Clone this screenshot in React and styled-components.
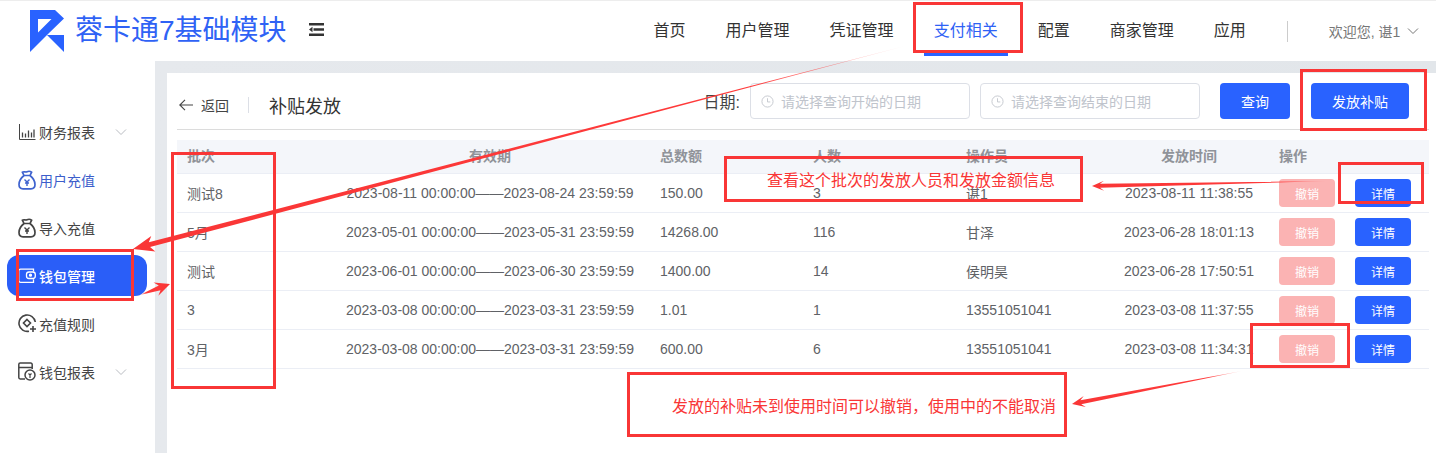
import styled, { createGlobalStyle } from "styled-components"

const GlobalStyle = createGlobalStyle`
    html, body {
        margin: 0;
        height: 100%;
        overflow: hidden;
        background: #fff;
    }
    body, button, input {
        font-family: "Liberation Sans", "Noto Sans CJK SC", sans-serif;
    }
`

const navItems = ["首页", "用户管理", "凭证管理", "支付相关", "配置", "商家管理", "应用"]

const rows = [
    ["测试8", "2023-08-11 00:00:00——2023-08-24 23:59:59", "150.00", "3", "谌1", "2023-08-11 11:38:55"],
    ["5月", "2023-05-01 00:00:00——2023-05-31 23:59:59", "14268.00", "116", "甘泽", "2023-06-28 18:01:13"],
    ["测试", "2023-06-01 00:00:00——2023-06-30 23:59:59", "1400.00", "14", "侯明昊", "2023-06-28 17:50:51"],
    ["3", "2023-03-08 00:00:00——2023-03-31 23:59:59", "1.01", "1", "13551051041", "2023-03-08 11:37:55"],
    ["3月", "2023-03-08 00:00:00——2023-03-31 23:59:59", "600.00", "6", "13551051041", "2023-03-08 11:34:31"],
]

const Chevron = ({ size = 12, color = "#b9bcc2" }) => (
    <svg width={size} height={size} viewBox="0 0 12 12" fill="none" stroke={color} strokeWidth="1">
        <path d="M1 3.5 6 8.5 11 3.5" />
    </svg>
)

const BagIcon = ({ color }) => (
    <svg width="18" height="20" viewBox="0 0 18 20" fill="none" stroke={color} strokeWidth="1.7">
        <path d="M6 5.5 4.4 2.2C6 1 7.5 2.6 9 1.8c1.500-.8 3-.8 4.600.4L12 5.500z" />
        <path d="M6 5.500C3.500 7.500 1 11 1 14.500 1 17.500 3 18.800 5 18.800h8c2 0 4-1.300 4-4.300 0-3.500-2.500-7-5-9" />
        <path d="M6.500 9.500 9 12l2.500-2.500M9 12v4M7 13h4" strokeWidth="1.400" />
    </svg>
)

const icons = {
    chart: (
        <svg width="17" height="16" viewBox="0 0 17 16" fill="none" stroke="#444" strokeWidth="1">
            <path d="M.5 0v15.500h16" />
            <path d="M3.500 13.500v-5M6.500 13.500v-4M9.500 13.500v-7M12.500 13.500v-5M15 13.500v-8" strokeWidth="1.300" />
        </svg>
    ),
    bagBlue: <BagIcon color="#3f63cf" />,
    bagDark: <BagIcon color="#444" />,
    wallet: (
        <svg width="18" height="15" viewBox="0 0 18 15" fill="none" stroke="#fff" strokeWidth="1.300">
            <path d="M15.500 3.500V1.200H2.500A1.800 1.800 0 0 0 .7 3v9.500a1.800 1.800 0 0 0 1.800 1.800h13v-3" />
            <rect x="8.500" y="4" width="8.800" height="6.500" rx="2.500" />
            <circle cx="12.500" cy="7.200" r="1" fill="#fff" />
        </svg>
    ),
    rule: (
        <svg width="19" height="19" viewBox="0 0 19 19" fill="none" stroke="#444" strokeWidth="1.600">
            <path d="M11 17.200A8.200 8.200 0 1 1 17.300 8" />
            <path d="M9 5.500 12.500 9 9 12.500 5.500 9z" />
            <path d="M15 12v6M12 15h6" />
        </svg>
    ),
    report: (
        <svg width="18" height="19" viewBox="0 0 18 19" fill="none" stroke="#444" strokeWidth="1.500">
            <path d="M7 17H2.200A1.400 1.400 0 0 1 .8 15.600V2.400A1.400 1.400 0 0 1 2.200 1h10.600a1.400 1.400 0 0 1 1.400 1.400V7" />
            <path d="M1 5.500h13" />
            <circle cx="12" cy="13" r="5" />
            <path d="M10.500 11.500 12 13l1.500-1.500M12 13v3" strokeWidth="1.200" />
        </svg>
    ),
}

const sideItems = [
    { label: "财务报表", icon: "chart", arrow: true },
    { label: "用户充值", icon: "bagBlue", tone: "#3c5ecb" },
    { label: "导入充值", icon: "bagDark" },
    { label: "钱包管理", icon: "wallet", active: true },
    { label: "充值规则", icon: "rule" },
    { label: "钱包报表", icon: "report", arrow: true },
]

const Arrow = ({ id, from, tip, shaft = 5, head = 15, headLen = 18 }) => {
    const dx = tip[0] - from[0]
    const dy = tip[1] - from[1]
    const len = Math.hypot(dx, dy)
    const ux = dx / len
    const uy = dy / len
    const nx = -uy
    const ny = ux
    const neck = [tip[0] - ux * headLen, tip[1] - uy * headLen]
    const waist = [tip[0] - ux * (headLen - 4), tip[1] - uy * (headLen - 4)]
    const pts = [
        from,
        [waist[0] + nx * shaft / 2, waist[1] + ny * shaft / 2],
        [neck[0] + nx * head / 2, neck[1] + ny * head / 2],
        tip,
        [neck[0] - nx * head / 2, neck[1] - ny * head / 2],
        [waist[0] - nx * shaft / 2, waist[1] - ny * shaft / 2],
    ]
    return (
        <>
            <defs>
                <linearGradient id={id} gradientUnits="userSpaceOnUse" x1={from[0]} y1={from[1]} x2={tip[0]} y2={tip[1]}>
                    <stop offset="0" stopColor="#ff3a3a" stopOpacity="0.15" />
                    <stop offset="0.2" stopColor="#ff3a3a" />
                    <stop offset="1" stopColor="#f93636" />
                </linearGradient>
            </defs>
            <polygon points={pts.map((p) => p.join(",")).join(" ")} fill={`url(#${id})`} />
        </>
    )
}

export default function App() {
    return (
        <>
            <GlobalStyle />
            <SPage>
                <SHeader>
                    <SBrand>
                        <svg width="34" height="42" viewBox="30 10 34 42">
                            <path fill="#2962ff" fillRule="evenodd" d="M30 10H55L64 18.500 47 35H64V52L47 35 30 52ZM38 19V32.500L51.500 19Z" />
                        </svg>
                        <SBrandName>蓉卡通7基础模块</SBrandName>
                    </SBrand>
                    <SFold>
                        <svg width="15" height="13" viewBox="0 0 15 13" fill="#333">
                            <path d="M0 0h15v2.600H0zM4.500 5.200H15v2.600H4.500zM0 10.400h15V13H0zM3.500 3.800v5.400L0 6.500z" />
                        </svg>
                    </SFold>
                    <SNav>
                        {navItems.map((item) => (
                            <SNavItem key={item} $active={item === "支付相关"}>{item}</SNavItem>
                        ))}
                    </SNav>
                    <SUser>
                        <span>欢迎您, 谌1</span>
                        <Chevron color="#777" />
                    </SUser>
                </SHeader>

                <SBody>
                    <SSide>
                        {sideItems.map((item) => (
                            <SSideItem key={item.label} $active={item.active} $tone={item.tone}>
                                <SSideIcon>{icons[item.icon]}</SSideIcon>
                                <span>{item.label}</span>
                                {item.arrow && <SSideArrow><Chevron /></SSideArrow>}
                            </SSideItem>
                        ))}
                    </SSide>

                    <SMain>
                        <SCard>
                            <SCardHead>
                                <SBack>
                                    <svg width="14" height="12" viewBox="0 0 14 12" fill="none" stroke="#444" strokeWidth="1.100">
                                        <path d="M6 .8.8 6 6 11.200M.8 6H14" />
                                    </svg>
                                    <span>返回</span>
                                </SBack>
                                <STitle>补贴发放</STitle>
                                <SDateLabel>日期:</SDateLabel>
                                <SDateInput>
                                    <ClockIcon />
                                    <span>请选择查询开始的日期</span>
                                </SDateInput>
                                <SDateInput>
                                    <ClockIcon />
                                    <span>请选择查询结束的日期</span>
                                </SDateInput>
                                <SQuery>查询</SQuery>
                                <SGrant>发放补贴</SGrant>
                            </SCardHead>

                            <SThead>
                                <SHeadCell>批次</SHeadCell>
                                <SHeadCell $center>有效期</SHeadCell>
                                <SHeadCell>总数额</SHeadCell>
                                <SHeadCell>人数</SHeadCell>
                                <SHeadCell>操作员</SHeadCell>
                                <SHeadCell $center>发放时间</SHeadCell>
                                <SHeadCell>操作</SHeadCell>
                            </SThead>
                            {rows.map((row) => (
                                <SRow key={row[5]}>
                                    <SCell>{row[0]}</SCell>
                                    <SCell $center>{row[1]}</SCell>
                                    <SCell>{row[2]}</SCell>
                                    <SCell>{row[3]}</SCell>
                                    <SCell>{row[4]}</SCell>
                                    <SCell $center>{row[5]}</SCell>
                                    <SActions>
                                        <SRevoke>撤销</SRevoke>
                                        <SDetail>详情</SDetail>
                                    </SActions>
                                </SRow>
                            ))}
                        </SCard>
                    </SMain>
                </SBody>

                {/* 标注层 */}
                <SMark $x={913} $y={2} $w={110} $h={51} />
                <SMark $x={1300} $y={69} $w={127} $h={62} />
                <SMark $x={171} $y={152} $w={105} $h={237} />
                <SMark $x={16} $y={249} $w={118} $h={52} />
                <SMark $x={1338} $y={162} $w={86} $h={42} />
                <SMark $x={1250} $y={323} $w={100} $h={45} />
                <SNote $x={724} $y={156} $w={359} $h={46} $pad={43}>查看这个批次的发放人员和发放金额信息</SNote>
                <SNote $x={627} $y={372} $w={440} $h={65} $pad={45}>发放的补贴未到使用时间可以撤销，使用中的不能取消</SNote>
                <SArrows width="1436" height="453" viewBox="0 0 1436 453">
                    <Arrow id="a1" from={[905, 46]} tip={[133, 249]} shaft={5} head={16} headLen={21} />
                    <Arrow id="a2" from={[140, 295]} tip={[170, 284]} shaft={5} head={14} headLen={15} />
                    <Arrow id="a3" from={[1327, 181]} tip={[1092, 186]} shaft={4} head={10} headLen={12} />
                    <Arrow id="a4" from={[1242, 371]} tip={[1072, 404]} shaft={4} head={11} headLen={13} />
                </SArrows>
            </SPage>
        </>
    )
}

const ClockIcon = () => (
    <svg width="13" height="13" viewBox="0 0 14 14" fill="none" stroke="#c4c7cd" strokeWidth="1">
        <circle cx="7" cy="7" r="6" />
        <path d="M7 3.500V7.500H10" />
    </svg>
)

const SPage = styled.div`
    position: relative;
    display: flex;
    flex-direction: column;
    width: 1436px;
    height: 453px;
    overflow: hidden;
    background: #fff;
    border-top: 1px solid #ededed;
    box-sizing: border-box;
`

const SHeader = styled.header`
    display: flex;
    align-items: center;
    height: 60px;
    flex-shrink: 0;
    padding-left: 30px;
`

const SBrand = styled.div`
    display: flex;
    align-items: center;
    gap: 11px;
`

const SBrandName = styled.div`
    font-size: 28px;
    line-height: 42px;
    color: #2f62f5;
    white-space: nowrap;
`

const SFold = styled.div`
    display: flex;
    margin-left: 22px;
    margin-top: -3px;
`

const SNav = styled.nav`
    display: flex;
    gap: 40px;
    margin-left: 330px;
    height: 100%;
`

const SNavItem = styled.div`
    position: relative;
    font-size: 16px;
    line-height: 60px;
    color: ${(p) => (p.$active ? "#2f62f5" : "#333")};
    white-space: nowrap;
    &::after {
        content: "";
        display: ${(p) => (p.$active ? "block" : "none")};
        position: absolute;
        left: -10px;
        right: -10px;
        top: 51px;
        height: 4px;
        background: #2962ff;
    }
`

const SUser = styled.div`
    display: flex;
    align-items: center;
    gap: 7px;
    height: 21px;
    margin-left: 41px;
    padding-left: 41px;
    border-left: 1px solid #ccc;
    font-size: 14px;
    color: #777;
    white-space: nowrap;
`

const SBody = styled.div`
    display: flex;
    flex: 1;
    min-height: 0;
`

const SSide = styled.aside`
    display: flex;
    flex-direction: column;
    width: 155px;
    flex-shrink: 0;
    padding: 50px 8px 0 7px;
    box-sizing: border-box;
`

const SSideItem = styled.div`
    position: relative;
    display: flex;
    align-items: center;
    height: 41px;
    margin-bottom: 7px;
    padding-left: 10px;
    border-radius: 12px;
    font-size: 14px;
    font-weight: ${(p) => (p.$active ? 500 : 400)};
    background: ${(p) => (p.$active ? "#2a5ef8" : "transparent")};
    color: ${(p) => (p.$active ? "#fff" : p.$tone || "#444")};
    white-space: nowrap;
`

const SSideIcon = styled.span`
    display: flex;
    justify-content: center;
    width: 20px;
    margin-right: 2px;
`

const SSideArrow = styled.span`
    display: flex;
    margin-left: 20px;
`

const SMain = styled.main`
    flex: 1;
    min-width: 0;
    display: flex;
    padding: 12px 0 0 12px;
    background: linear-gradient(90deg, #e6e9ed, #e2e6ea);
`

const SCard = styled.section`
    flex: 1;
    min-width: 0;
    padding: 0 7px 0 10px;
    background: #fff;
`

const SCardHead = styled.div`
    display: flex;
    align-items: center;
    height: 56px;
    margin-bottom: 10px;
    padding-right: 20px;
    border-bottom: 1px solid #dcdcdc;
`

const SBack = styled.div`
    display: flex;
    align-items: center;
    gap: 8px;
    height: 16px;
    margin: 8px 20px 0 2px;
    padding-right: 19px;
    border-right: 1px solid #dcdfe6;
    font-size: 14px;
    color: #444;
`

const STitle = styled.h1`
    margin: 8px 0 0 0;
    padding-left: 0;
    font-size: 18px;
    font-weight: 400;
    color: #333;
`

const SDateLabel = styled.label`
    margin-left: auto;
    margin-right: 10px;
    font-size: 16px;
    color: #444;
`

const SDateInput = styled.div`
    display: flex;
    align-items: center;
    gap: 7px;
    width: 220px;
    height: 36px;
    margin-right: 10px;
    padding-left: 10px;
    box-sizing: border-box;
    border: 1px solid #dcdfe6;
    border-radius: 4px;
    font-size: 14px;
    color: #c0c4cc;
`

const SQuery = styled.button`
    width: 70px;
    height: 36px;
    margin-left: 10px;
    padding: 0;
    border: 0;
    border-radius: 4px;
    background: #2962ff;
    color: #fff;
    font-size: 14px;
`

const SGrant = styled(SQuery)`
    width: 98px;
    margin-left: 21px;
`

const tableColumns = "153px 320px 153px 153px 153px 160px 160px"

const SThead = styled.div`
    display: grid;
    grid-template-columns: ${tableColumns};
    align-items: center;
    height: 33px;
    background: #f4f6fa;
    border-bottom: 1px solid #ebeef5;
`

const SHeadCell = styled.div`
    padding: 0 10px 3px;
    font-size: 14px;
    font-weight: 700;
    color: #909399;
    text-align: ${(p) => (p.$center ? "center" : "left")};
`

const SRow = styled.div`
    display: grid;
    grid-template-columns: ${tableColumns};
    align-items: center;
    height: 38px;
    border-bottom: 1px solid #ebeef5;
`

const SCell = styled.div`
    padding: 0 10px;
    font-size: 14px;
    color: #606266;
    white-space: nowrap;
    text-align: ${(p) => (p.$center ? "center" : "left")};
`

const SActions = styled.div`
    display: flex;
    gap: 20px;
    padding-left: 10px;
`

const SDetail = styled.button`
    width: 56px;
    height: 28px;
    padding: 0;
    border: 0;
    border-radius: 4px;
    background: #2962ff;
    color: #fff;
    font-size: 12px;
`

const SRevoke = styled(SDetail)`
    background: #fbb3b3;
`

const SMark = styled.div`
    position: absolute;
    left: ${(p) => p.$x}px;
    top: ${(p) => p.$y - 1}px;
    width: ${(p) => p.$w}px;
    height: ${(p) => p.$h}px;
    box-sizing: border-box;
    border: 3px solid #f93636;
    pointer-events: none;
`

const SNote = styled(SMark)`
    display: flex;
    align-items: center;
    padding-left: ${(p) => p.$pad - 3}px;
    font-size: 16px;
    color: #f93636;
    white-space: nowrap;
`

const SArrows = styled.svg`
    position: absolute;
    left: 0;
    top: -1px;
    pointer-events: none;
`
